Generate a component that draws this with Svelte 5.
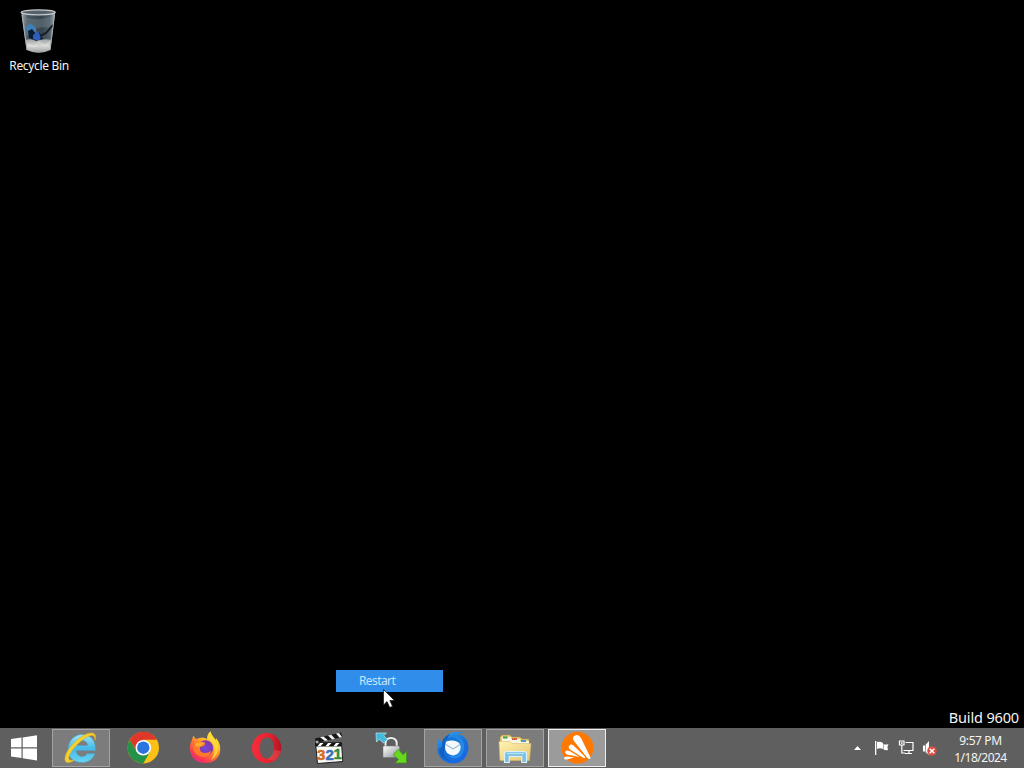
<script>
  const apps = [
    { id: 'ie', name: 'Internet Explorer', state: 'open' },
    { id: 'chrome', name: 'Chrome', state: '' },
    { id: 'firefox', name: 'Firefox', state: '' },
    { id: 'opera', name: 'Opera', state: '' },
    { id: 'mpc', name: 'Media Player Classic', state: '' },
    { id: 'lock', name: 'Lock', state: '' },
    { id: 'thunderbird', name: 'Thunderbird', state: 'open' },
    { id: 'explorer', name: 'File Explorer', state: 'open' },
    { id: 'avast', name: 'Avast', state: 'active' }
  ];
</script>

<div class="screen">
  <main class="desktop">
    <div class="shortcut">
      <svg class="bin" width="40" height="48" viewBox="0 0 40 48">
        <defs>
          <linearGradient id="glass" x1="0" x2="1">
            <stop offset="0" stop-color="#a6afb4" /><stop offset=".18" stop-color="#4b5860" />
            <stop offset=".6" stop-color="#35434d" /><stop offset=".85" stop-color="#53626b" /><stop offset="1" stop-color="#aeb6ba" />
          </linearGradient>
          <linearGradient id="paper" x1="0" y1="0" x2="0" y2="1">
            <stop offset="0" stop-color="#9fa3a5" /><stop offset=".5" stop-color="#d9d9d7" /><stop offset="1" stop-color="#9b9d9e" />
          </linearGradient>
        </defs>
        <path d="M2.500 5 L7.500 42 Q20 48 31.500 42 L36 5Z" fill="url(#glass)" />
        <path d="M5 9 Q20 14 34 8 L33 20 Q19 17 10 25Z" fill="#71818a" opacity=".45" />
        <path d="M7 20 Q9 14 14 17 Q18 19 17 25 L14 23 L12 28 L8 27Z" fill="#3f7fb5" />
        <path d="M9 23 L13 21 L17 26 L20 24 L24 31 L20 34 L10 30Z" fill="#0d1b2d" />
        <path d="M14 27 L19 23 L22 29 L20 33 L14 31Z" fill="#2c5fbd" />
        <path d="M21 28 L27 25 L34 17" stroke="#17202a" stroke-width="2" fill="none" />
        <path d="M6.500 32 Q12 30 17 33 Q25 30 32.500 32 L31 42 Q20 47.500 8 42Z" fill="url(#paper)" />
        <path d="M8 36 L15 39 L20 34 L26 38 L31 34" stroke="#eee" stroke-width="1" opacity=".6" fill="none" />
        <path d="M3 7 L8 42 M35.500 7 L31 42" stroke="#a9b0b3" stroke-width="1" />
        <ellipse cx="19.200" cy="4.300" rx="17" ry="2.500" fill="#56616a" stroke="#c5cbce" stroke-width="1.300" />
      </svg>
      <span class="bin-label">Recycle Bin</span>
    </div>

    <div class="menu"><span>Restart</span></div>
    <svg class="cursor" width="13" height="20" viewBox="0 0 13 20">
      <path d="M.5 .5 V16 L4 12.600 L6.800 18.500 L9.500 17.200 L6.800 11.500 H11.500Z" fill="#fff" stroke="#111" stroke-width=".7" />
    </svg>
    <div class="build">Build 9600</div>
  </main>

  <footer class="taskbar">
    <button class="start" aria-label="Start">
      <svg width="28" height="28" viewBox="0 0 28 28" fill="#fff">
        <path d="M1 5 L11.500 3.600 V13.300 H1Z M12.700 3.400 L27 1.200 V13.300 H12.700Z M1 14.500 H11.500 V24 L1 22.600Z M12.700 14.500 H27 V26.400 L12.700 24.200Z" />
      </svg>
    </button>
    <nav class="apps">
      {#each apps as app}
        <button class="app {app.state}" aria-label={app.name}>
          <svg width="58" height="38" viewBox="0 0 58 38">
            {#if app.id === 'ie'}
              <defs><linearGradient id="iee" x1="0" y1="0" x2="0" y2="1"><stop stop-color="#9be5fa" /><stop offset=".5" stop-color="#45b9e8" /><stop offset="1" stop-color="#68d3f5" /></linearGradient></defs>
              <path fill-rule="evenodd" d="M43.500 21.500 H24.200 C24.500 28.500 33 29.300 35 24.500 H43 C40.500 31 36 33.500 30 33.500 C21 33.500 15.700 28 16 20 C16.400 12 22 5.500 30 5.500 C39 5.500 44 12 43.500 21.500Z M24.300 16.500 H35.600 C35.200 10 25.400 9.800 24.300 16.500Z" fill="url(#iee)" stroke="#4c9dbd" stroke-width=".5" />
              <path d="M42.800 11.500 C45 6 42.500 2.500 36 4.500 C25 8 12 23 13 31 C14 35.500 20 33 22.500 31 C18 32 16 31 17 27.500 C19 20 31 9 38 6.800 C42 5.500 43.200 7.500 42.800 11.500Z" fill="#f8cf28" stroke="#d6b12e" stroke-width=".5" />
            {:else if app.id === 'chrome'}
              <circle cx="29.300" cy="18.700" r="15.700" fill="#fbc116" />
              <path d="M15.700 10.800 A15.700 15.700 0 0 1 43 10.800 H29.300 L22.500 22.700Z" fill="#df382b" />
              <path d="M15.700 10.800 L22.500 22.700 L36 22.700 L29.300 34.400 A15.700 15.700 0 0 1 15.700 10.800Z" fill="#249247" />
              <circle cx="29.300" cy="18.700" r="7.800" fill="#fff" /><circle cx="29.300" cy="18.700" r="6.200" fill="#2b73df" />
            {:else if app.id === 'firefox'}
              <defs>
                <linearGradient id="fox" x1=".85" y1="0" x2=".2" y2="1"><stop stop-color="#fff044" /><stop offset=".3" stop-color="#ffc42b" /><stop offset=".58" stop-color="#ff7631" /><stop offset=".82" stop-color="#fa3855" /><stop offset="1" stop-color="#dd2b85" /></linearGradient>
                <radialGradient id="foxcore"><stop stop-color="#704bd5" /><stop offset="1" stop-color="#8535ac" /></radialGradient>
              </defs>
              <path d="M16 11 Q16.500 8 17.500 6.500 Q18.500 9 20.500 10 Q23 8.500 26 8.500 Q29 8.500 31 10 Q31 5 34.500 2.300 Q35 5 37.500 8 Q39 10 40 11 V9 Q46 16 43.500 25 Q40 34 29.500 34 Q16 34 14 21 Q13.500 15 16 11Z" fill="url(#fox)" />
              <path d="M36 8 Q42 13 42 20 Q41 28 35 31 Q40 23 38 17 Q37 13 32 10 L34.500 3Z" fill="#ffdc3c" opacity=".8" />
              <circle cx="29.500" cy="19" r="7.700" fill="url(#foxcore)" />
              <path d="M19 15 Q22 11 29 13.500 Q30 16 26.500 17.500 Q23.500 17 24 20 Q24 24 29 24 Q34 24 35 21 Q35 27 28 28 Q20 28 17.500 21 Q17 17 19 15Z" fill="#ff7b2a" />
              <path d="M19 15 Q22 12 28 13.800 Q28 15.500 25 17 Q22 17 20 18Z" fill="#ffad31" />
            {:else if app.id === 'opera'}
              <defs><linearGradient id="op" x1="0" x2="1"><stop stop-color="#f62e3c" /><stop offset=".6" stop-color="#e72030" /><stop offset="1" stop-color="#ae1725" /></linearGradient></defs>
              <path fill-rule="evenodd" d="M28.700 4 A14.700 15 0 1 1 28.600 34 A14.700 15 0 1 1 28.700 4Z M29 8.500 C24 8.500 22 13 22 19 C22 25 24 29.500 29 29.500 C34 29.500 36 25 36 19 C36 13 34 8.500 29 8.500Z" fill="url(#op)" />
              <path d="M31 29 Q35 26 36 21 L43.100 22 Q41 29 36 32 Q33 32 29 29.500Z" fill="#f05b5e" opacity=".45" />
            {:else if app.id === 'mpc'}
              <path d="M15 9.400 L41 3.500 L42.500 8 L16 14Z" fill="#171717" />
              <path d="M20 8.200 L25 12 L28 11.300 L23.500 7.500Z M28 6.500 L32 10.500 L35 9.800 L31.300 5.800Z M36 4.600 L39.500 8.700 L42 8 L39 4Z" fill="#eee" />
              <path d="M15.500 14 L41.500 14 L42.800 32.500 L17.500 34.500Z" fill="#f9f9f3" stroke="#202020" />
              <path d="M15 13.500 H41.500 V17.500 H15.500Z" fill="#151515" />
              <path d="M20 14 L17.500 17.200 H20.500 L23.500 14Z M28 14 L25.500 17.200 H28.500 L31.500 14Z M36 14 L33.500 17.200 H36.500 L39.500 14Z" fill="#fff" />
              <circle cx="17.200" cy="13" r="1.500" fill="#aaa" />
              <g font-family="Liberation Sans, Arial, sans-serif" font-weight="700" font-size="15" stroke-width=".5">
                <text x="17" y="31.200" fill="#d46d25" stroke="#d46d25">3</text><text x="25.500" y="30.700" fill="#3971b9" stroke="#3971b9">2</text><text x="33.500" y="30.200" fill="#338d38" stroke="#338d38">1</text>
              </g>
            {:else if app.id === 'lock'}
              <defs><linearGradient id="metal" x1="0" y1="0" x2="1" y2="1"><stop stop-color="#fff" /><stop offset=".5" stop-color="#c7c9ca" /><stop offset="1" stop-color="#858889" /></linearGradient></defs>
              <path d="M23.500 18 V14.500 Q23.500 9 29 9 Q34.700 9 34.700 14.500 V18" fill="none" stroke="#555" stroke-width="3.500" />
              <path d="M23.500 18 V14.500 Q23.500 9 29 9 Q34.700 9 34.700 14.500 V18" fill="none" stroke="#eceeee" stroke-width="2" />
              <rect x="21" y="17" width="16.500" height="11.500" rx="1" fill="url(#metal)" stroke="#737373" stroke-width=".5" />
              <path d="M14 4 H24.500 L21.700 6.500 L25.500 10.500 L21.500 14 L17.300 10.200 L14.500 13Z" fill="#43b9dc" stroke="#b4e9f6" stroke-width=".7" />
              <path d="M33 23.500 L36.500 20.500 L41 25.800 L44.500 22.500 V34 H33 L36.500 30.500 L31.500 26Z" fill="#66d91e" stroke="#418d24" stroke-width=".7" />
            {:else if app.id === 'thunderbird'}
              <defs><linearGradient id="bird" x1=".2" y1="0" x2=".7" y2="1"><stop stop-color="#2e9df4" /><stop offset=".5" stop-color="#1672d8" /><stop offset="1" stop-color="#1769e4" /></linearGradient></defs>
              <path d="M15 9 Q12.500 17 13.500 23 Q17 34 29 34.500 Q42 34 44.500 20 Q45 12 39.500 7.500 Q37 5 33 5 Q36 3.500 40.500 3.700 Q34 1.500 27 4.200 Q20 7 18.500 13 Q16 12 15 9Z" fill="url(#bird)" />
              <path d="M18 18 Q17 8 26 5 Q22 11 22 14 L20 22 Q19 29 27 32 Q16 30 14.500 20Z" fill="#1560be" />
              <path d="M26 6 Q35 6 39 12 Q42 20 37 27 Q31 32 24 27 Q34 27 36 20Z" fill="#2688e6" />
              <path d="M22 12 Q26 9 31 11 Q36 13 36.700 18 Q36.500 25 29 26.500 Q21 25.500 21 18Z" fill="#f4f9fc" />
              <path d="M22 15.500 L29 20 L36 15.500" fill="none" stroke="#9dbdd3" stroke-width="1.100" />
              <path d="M20.500 14 Q22 8 28 8 Q35 9 37 15 Q33 11.500 28 11.500 Q23 11 20.500 14Z" fill="#1676d4" />
            {:else if app.id === 'explorer'}
              <defs><linearGradient id="folder" x1="0" y1="0" x2="1" y2="1"><stop stop-color="#fff3b4" /><stop offset="1" stop-color="#e6c66c" /></linearGradient></defs>
              <path d="M14 8 L16 6 H24 L26 8 H34 L36 10 H43 V31 H14Z" fill="#e8ce78" stroke="#aa8c45" stroke-width=".6" />
              <path d="M16 8 H25 V10 H34 V12 H43 V18 H16Z" fill="#f9f7df" />
              <path d="M17 7.500 H21.500 V9.500 H17Z" fill="#30a64a" /><path d="M26 9 H31 V11 H26Z" fill="#d76345" /><path d="M35 11 H40 V13 H35Z" fill="#469ac5" />
              <path d="M13 12.500 H24 L26 14.500 H45 L43.500 31.500 H14Z" fill="url(#folder)" stroke="#d4b667" stroke-width=".5" />
              <path d="M18.500 33.500 V25 Q18.500 22.500 21 22.500 H38 Q40.500 22.500 40.500 25 V33.500 H35.800 V27.500 H23.300 V33.500Z" fill="#80bee2" stroke="#d8f1fa" stroke-width="1.200" />
              <path d="M21 24.500 H38" stroke="#ade0f5" stroke-width="1.500" />
            {:else}
              <circle cx="29.500" cy="18.700" r="16" fill="#ff7800" />
              <path d="M42 30 Q40.500 30 39 28.500 L26 12 Q23.500 8 27 6.500 Q30.500 5 33 9 L42.500 28.500Z" fill="#fff" />
              <path d="M37.500 29 Q36 29.300 33 27.500 L22 20.500 Q19.700 18.500 21.300 16.500 Q23 14.500 25.500 16.500 L36.500 27.200Z M31.500 28 L20 25.800 Q16.700 25 17.300 22.500 Q18.300 20.600 22 22.200Z M26 28.500 L19 30.500 Q16 31 16 29 Q16.300 27.300 19.500 27.500Z" fill="#fff" />
            {/if}
          </svg>
        </button>
      {/each}
    </nav>

    <aside class="tray">
      <svg width="88" height="24" viewBox="0 0 88 24">
        <path d="M5 14 L8.500 10 L12 14Z" fill="#fff" />
        <g transform="translate(26 5)" fill="#fff"><path d="M0 0 H1.300 V14 H0Z M2 1 Q5 0 8 2 V8 Q5 6.500 2 8Z M8.500 3 Q11 4 13.500 3 L12.400 6 L13 9 Q11 9.500 8.500 8.500Z" /></g>
        <g fill="none" stroke="#fff" stroke-width="1.200"><path d="M56.500 6.500 H64 V14.500 H54.500 M60 15 V17 M56 17.500 H63" /><path d="M50.500 5 H55 V9 H50.500Z M52.800 9 V17 H56" /><path d="M52.800 6 V8" /></g>
        <path d="M74 9.500 H76 L80 5 V19 L76 15.500 H74Z" fill="#fff" /><path d="M76.500 7 V18" stroke="#777" stroke-width=".7" />
        <circle cx="83" cy="15" r="4.800" fill="#d94d40" /><path d="M80.700 12.700 L85.300 17.300 M85.300 12.700 L80.700 17.300" stroke="#fff" stroke-width="1.500" />
      </svg>
      <time class="clock"><span class="hour">9:57 PM</span><span class="date">1/18/2024</span></time>
    </aside>
  </footer>
</div>

<style>
  :global(body) { margin: 0; background: #000; }
  .screen { width: 1024px; height: 768px; display: flex; flex-direction: column; overflow: hidden; background: #000; color: #f4f4f4; font-family: "Noto Sans", "Open Sans", sans-serif; }
  .desktop { position: relative; flex: 1; }
  .shortcut { width: 78px; padding-top: 8px; display: flex; flex-direction: column; align-items: center; }
  .bin { display: block; }
  .bin-label { margin-top: 1px; font-size: 12px; line-height: 18px; letter-spacing: -.34px; white-space: nowrap; }
  .menu { position: absolute; left: 336px; top: 670px; width: 107px; height: 22px; background: #308eea; color: #c4e4fc; box-sizing: border-box; padding-left: 23px; font-size: 12px; line-height: 22px; letter-spacing: -.6px; }
  .cursor { position: absolute; left: 383px; top: 689px; }
  .build { position: absolute; right: 5px; bottom: 0; font-size: 14.5px; line-height: 21px; letter-spacing: -.15px; white-space: nowrap; }
  .taskbar { height: 40px; display: flex; background: #5f5f5f; }
  button { padding: 0; margin: 0; border: 0; background: none; display: flex; align-items: flex-start; }
  .start { width: 52px; padding: 6px 0 0 10px; }
  .apps { display: flex; gap: 4px; padding-top: 1px; }
  .app { width: 58px; height: 38px; }
  .app svg { display: block; }
  .open { background: #7c7c7c; box-shadow: inset 0 0 0 1px #a3a3a3; }
  .active { background: #9b9b9b; box-shadow: inset 0 0 0 1px #eee; }
  .tray { margin-left: auto; display: flex; }
  .tray > svg { display: block; margin-top: 8px; }
  .clock { box-sizing: border-box; width: 87px; display: flex; flex-direction: column; align-items: center; padding-top: 4px; font-size: 12px; line-height: 17px; letter-spacing: -.5px; white-space: nowrap; }
  .hour { letter-spacing: -.4px; }
</style>
